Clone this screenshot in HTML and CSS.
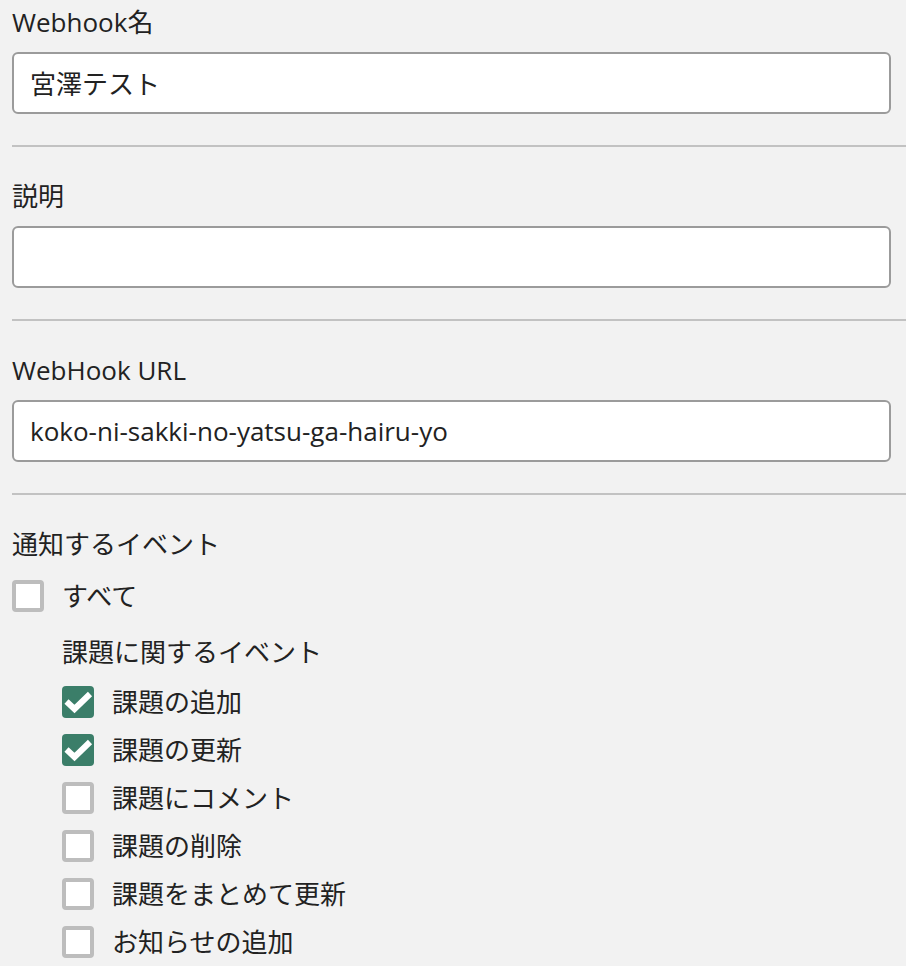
FILE: index.html
```html
<!DOCTYPE html>
<html lang="ja">
<head>
<meta charset="utf-8">
<title>Webhook</title>
<link rel="stylesheet" href="styles.css">
</head>
<body>
<form class="form">
  <div class="field">
    <label class="label">Webhook名</label>
    <input class="input" type="text" value="宮澤テスト">
  </div>
  <hr class="divider">
  <div class="field">
    <label class="label">説明</label>
    <input class="input" type="text" value="">
  </div>
  <hr class="divider">
  <div class="field">
    <label class="label">WebHook URL</label>
    <input class="input" type="text" value="koko-ni-sakki-no-yatsu-ga-hairu-yo">
  </div>
  <hr class="divider">
  <div class="field events">
    <div class="label">通知するイベント</div>
    <div class="row"><span class="box"></span><span class="text">すべて</span></div>
    <div class="group">
      <div class="group-title">課題に関するイベント</div>
      <div class="row"><span class="box checked"><svg viewBox="0 0 32 32" class="check"><polyline points="4.5,15.5 12.5,23 28,8"/></svg></span><span class="text">課題の追加</span></div>
      <div class="row"><span class="box checked"><svg viewBox="0 0 32 32" class="check"><polyline points="4.5,15.5 12.5,23 28,8"/></svg></span><span class="text">課題の更新</span></div>
      <div class="row"><span class="box"></span><span class="text">課題にコメント</span></div>
      <div class="row"><span class="box"></span><span class="text">課題の削除</span></div>
      <div class="row"><span class="box"></span><span class="text">課題をまとめて更新</span></div>
      <div class="row"><span class="box"></span><span class="text">お知らせの追加</span></div>
    </div>
  </div>
</form>
</body>
</html>
```

FILE: styles.css
```css
html, body {
  margin: 0;
  padding: 0;
  background: #f2f2f2;
}

body {
  font-family: "Open Sans", "Noto Sans CJK JP", sans-serif;
  font-size: 26px;
  color: #222;
  overflow: hidden;
}

.form {
  padding: 4px 0 0 12px;
}

.field {
  display: flex;
  flex-direction: column;
}

.label {
  display: block;
  line-height: 36px;
  height: 36px;
  margin-bottom: 12px;
}

.input {
  box-sizing: border-box;
  width: 879px;
  height: 62px;
  margin: 0 0 31px 0;
  padding: 0 16px;
  border: 2px solid #9b9b9b;
  border-radius: 6px;
  background: #fff;
  font-family: "Open Sans", "Noto Sans CJK JP", sans-serif;
  font-size: 26px;
  color: #222;
  outline: none;
}

.divider {
  height: 2px;
  margin: 0 0 31px 0;
  border: 0;
  background: #c2c2c2;
}

.events .label {
  margin-bottom: 10px;
}

.row {
  display: flex;
  align-items: center;
  height: 48px;
  gap: 18px;
}

.text {
  line-height: 36px;
}

.box {
  box-sizing: border-box;
  width: 32px;
  height: 32px;
  flex: none;
  border: 4px solid #bdbdbd;
  border-radius: 4px;
  background: #fff;
  display: flex;
  align-items: center;
  justify-content: center;
}

.box.checked {
  border: 0;
  background: #3b7e69;
}

.check {
  width: 32px;
  height: 32px;
  display: block;
}

.check polyline {
  fill: none;
  stroke: #fff;
  stroke-width: 6;
  stroke-linejoin: miter;
  stroke-linecap: butt;
}

.group {
  margin-left: 50px;
  margin-top: 14px;
}

.group-title {
  line-height: 36px;
  height: 36px;
  margin-bottom: 8px;
}
```
